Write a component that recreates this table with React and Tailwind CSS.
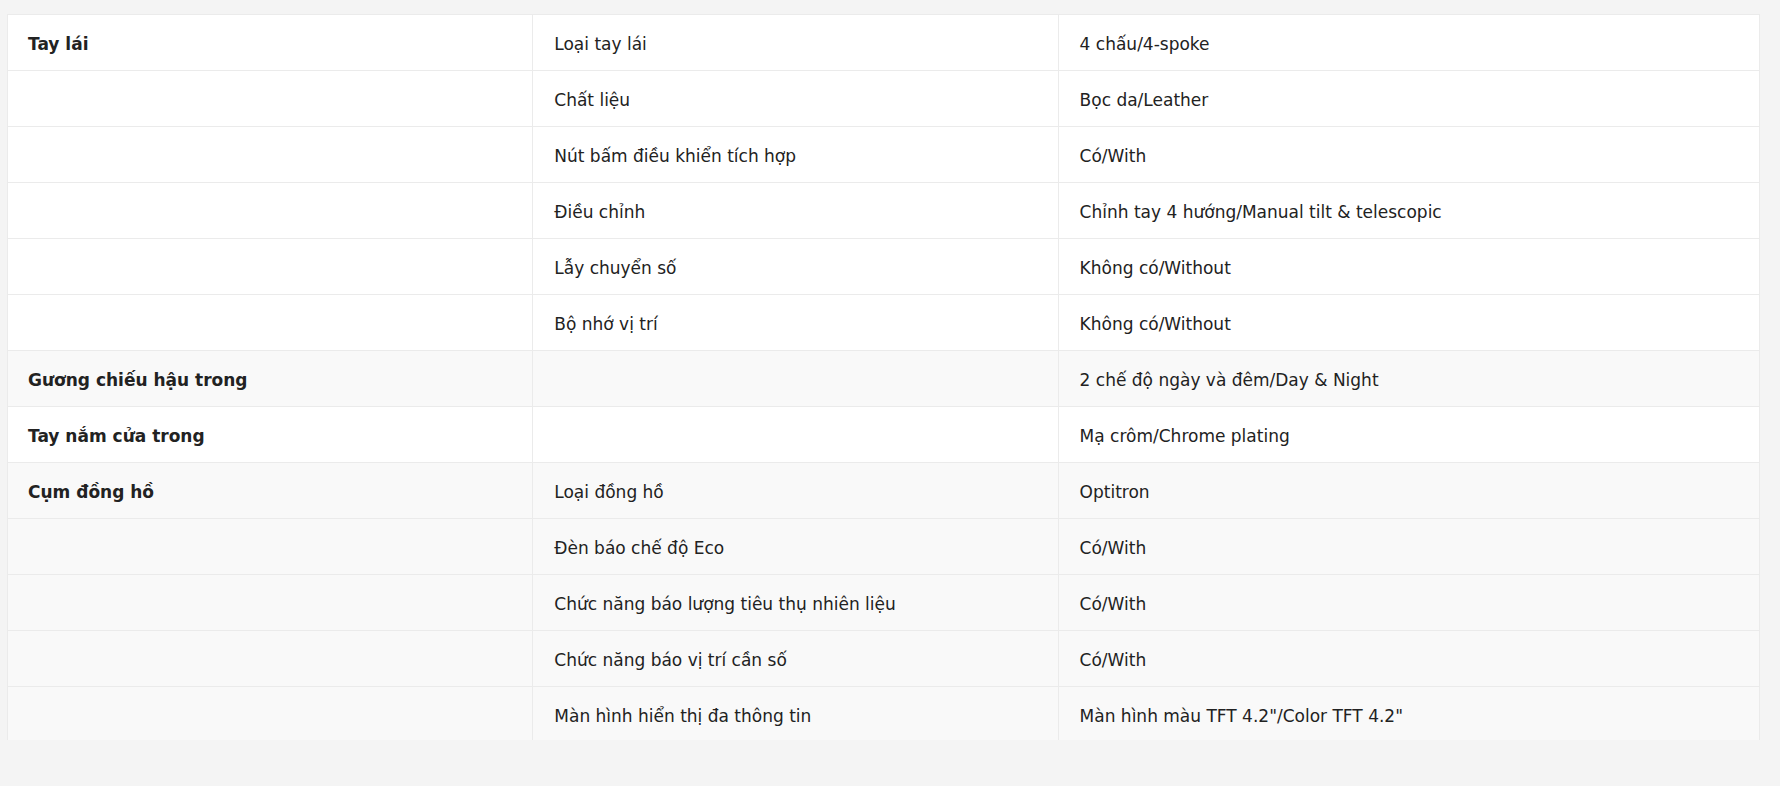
const rows = [
  { group: "Tay lái", sub: "Loại tay lái", value: "4 chấu/4-spoke", shade: false },
  { group: "", sub: "Chất liệu", value: "Bọc da/Leather", shade: false },
  { group: "", sub: "Nút bấm điều khiển tích hợp", value: "Có/With", shade: false },
  { group: "", sub: "Điều chỉnh", value: "Chỉnh tay 4 hướng/Manual tilt & telescopic", shade: false },
  { group: "", sub: "Lẫy chuyển số", value: "Không có/Without", shade: false },
  { group: "", sub: "Bộ nhớ vị trí", value: "Không có/Without", shade: false },
  { group: "Gương chiếu hậu trong", sub: "", value: "2 chế độ ngày và đêm/Day & Night", shade: true },
  { group: "Tay nắm cửa trong", sub: "", value: "Mạ crôm/Chrome plating", shade: false },
  { group: "Cụm đồng hồ", sub: "Loại đồng hồ", value: "Optitron", shade: true },
  { group: "", sub: "Đèn báo chế độ Eco", value: "Có/With", shade: true },
  { group: "", sub: "Chức năng báo lượng tiêu thụ nhiên liệu", value: "Có/With", shade: true },
  { group: "", sub: "Chức năng báo vị trí cần số", value: "Có/With", shade: true },
  { group: "", sub: "Màn hình hiển thị đa thông tin", value: 'Màn hình màu TFT 4.2"/Color TFT 4.2"', shade: true },
];

export default function App() {
  return (
    <div className="h-[786px] w-full bg-[#f4f4f4] pl-[7px] pr-[20px] pt-[14px] font-['DejaVu_Sans',sans-serif] text-[17px] text-[#222]">
      <div className="h-[726px] overflow-hidden border-l border-r border-t border-[#ebebeb]">
        {rows.map((r, i) => (
          <div
            key={i}
            className={`grid h-[56px] grid-cols-[30%_30%_40%] border-b border-[#ebebeb] ${r.shade ? "bg-[#f9f9f9]" : "bg-white"}`}
          >
            <div className="flex items-center border-r border-[#ebebeb] px-[20px] pt-[4px] font-bold">{r.group}</div>
            <div className="flex items-center border-r border-[#ebebeb] px-[21px] pt-[4px]">{r.sub}</div>
            <div className="flex items-center px-[21px] pt-[4px]">{r.value}</div>
          </div>
        ))}
      </div>
    </div>
  );
}
